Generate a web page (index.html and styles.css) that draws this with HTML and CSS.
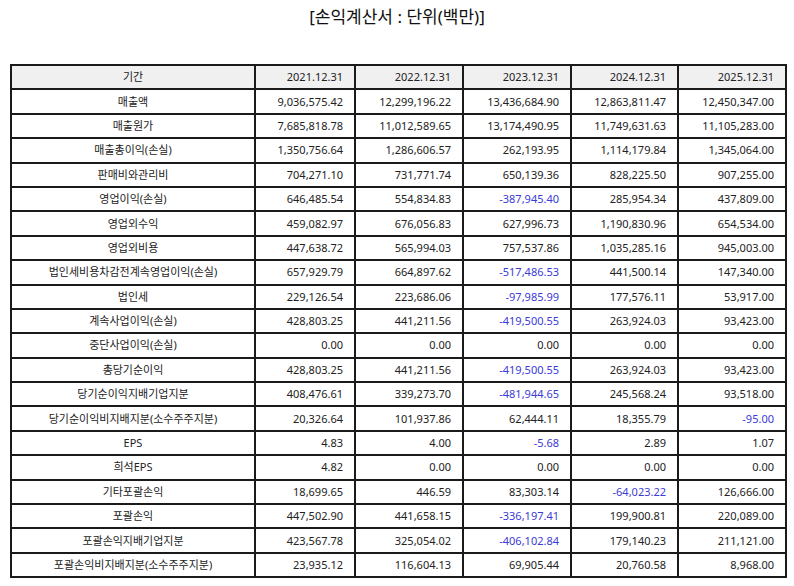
FILE: index.html
```html
<!DOCTYPE html>
<html lang="ko">
<head>
<meta charset="utf-8">
<link rel="stylesheet" href="styles.css">
</head>
<body>
<h1 class="title">[손익계산서 : 단위(백만)]</h1>
<table class="fin">
<colgroup>
<col class="c-label"><col class="c-y1"><col class="c-y2"><col class="c-y3"><col class="c-y4"><col class="c-y5">
</colgroup>
<thead>
<tr><th class="label">기간</th><th>2021.12.31</th><th>2022.12.31</th><th>2023.12.31</th><th>2024.12.31</th><th>2025.12.31</th></tr>
</thead>
<tbody>
<tr><td class="label">매출액</td><td>9,036,575.42</td><td>12,299,196.22</td><td>13,436,684.90</td><td>12,863,811.47</td><td>12,450,347.00</td></tr>
<tr><td class="label">매출원가</td><td>7,685,818.78</td><td>11,012,589.65</td><td>13,174,490.95</td><td>11,749,631.63</td><td>11,105,283.00</td></tr>
<tr><td class="label">매출총이익(손실)</td><td>1,350,756.64</td><td>1,286,606.57</td><td>262,193.95</td><td>1,114,179.84</td><td>1,345,064.00</td></tr>
<tr><td class="label">판매비와관리비</td><td>704,271.10</td><td>731,771.74</td><td>650,139.36</td><td>828,225.50</td><td>907,255.00</td></tr>
<tr><td class="label">영업이익(손실)</td><td>646,485.54</td><td>554,834.83</td><td class="neg">-387,945.40</td><td>285,954.34</td><td>437,809.00</td></tr>
<tr><td class="label">영업외수익</td><td>459,082.97</td><td>676,056.83</td><td>627,996.73</td><td>1,190,830.96</td><td>654,534.00</td></tr>
<tr><td class="label">영업외비용</td><td>447,638.72</td><td>565,994.03</td><td>757,537.86</td><td>1,035,285.16</td><td>945,003.00</td></tr>
<tr><td class="label">법인세비용차감전계속영업이익(손실)</td><td>657,929.79</td><td>664,897.62</td><td class="neg">-517,486.53</td><td>441,500.14</td><td>147,340.00</td></tr>
<tr><td class="label">법인세</td><td>229,126.54</td><td>223,686.06</td><td class="neg">-97,985.99</td><td>177,576.11</td><td>53,917.00</td></tr>
<tr><td class="label">계속사업이익(손실)</td><td>428,803.25</td><td>441,211.56</td><td class="neg">-419,500.55</td><td>263,924.03</td><td>93,423.00</td></tr>
<tr><td class="label">중단사업이익(손실)</td><td>0.00</td><td>0.00</td><td>0.00</td><td>0.00</td><td>0.00</td></tr>
<tr><td class="label">총당기순이익</td><td>428,803.25</td><td>441,211.56</td><td class="neg">-419,500.55</td><td>263,924.03</td><td>93,423.00</td></tr>
<tr><td class="label">당기순이익지배기업지분</td><td>408,476.61</td><td>339,273.70</td><td class="neg">-481,944.65</td><td>245,568.24</td><td>93,518.00</td></tr>
<tr><td class="label">당기순이익비지배지분(소수주주지분)</td><td>20,326.64</td><td>101,937.86</td><td>62,444.11</td><td>18,355.79</td><td class="neg">-95.00</td></tr>
<tr><td class="label">EPS</td><td>4.83</td><td>4.00</td><td class="neg">-5.68</td><td>2.89</td><td>1.07</td></tr>
<tr><td class="label">희석EPS</td><td>4.82</td><td>0.00</td><td>0.00</td><td>0.00</td><td>0.00</td></tr>
<tr><td class="label">기타포괄손익</td><td>18,699.65</td><td>446.59</td><td>83,303.14</td><td class="neg">-64,023.22</td><td>126,666.00</td></tr>
<tr><td class="label">포괄손익</td><td>447,502.90</td><td>441,658.15</td><td class="neg">-336,197.41</td><td>199,900.81</td><td>220,089.00</td></tr>
<tr><td class="label">포괄손익지배기업지분</td><td>423,567.78</td><td>325,054.02</td><td class="neg">-406,102.84</td><td>179,140.23</td><td>211,121.00</td></tr>
<tr><td class="label">포괄손익비지배지분(소수주주지분)</td><td>23,935.12</td><td>116,604.13</td><td>69,905.44</td><td>20,760.58</td><td>8,968.00</td></tr>
</tbody>
</table>
</body>
</html>
```

FILE: styles.css
```css
html, body {
  margin: 0;
  padding: 0;
  background: #ffffff;
}
body {
  font-family: "Noto Sans", "Noto Sans CJK KR", sans-serif;
  color: #222222;
}
.title {
  margin: 0;
  padding-top: 5px;
  height: 64px;
  box-sizing: border-box;
  text-align: center;
  font-size: 17px;
  font-weight: normal;
  line-height: 24px;
  color: #111111;
}
.fin {
  margin-left: 10px;
  width: 775px;
  border-collapse: collapse;
  table-layout: fixed;
  font-size: 11px;
}
.c-label { width: 244px; }
.c-y1 { width: 100px; }
.c-y2 { width: 108px; }
.c-y3 { width: 108px; }
.c-y4 { width: 107px; }
.c-y5 { width: 108px; }
.fin th, .fin td {
  border: 2px solid #1a1a1a;
  height: 24.4px;
  padding: 0 11px 0 4px;
  text-align: right;
  font-weight: normal;
  white-space: nowrap;
  line-height: 14px;
  box-sizing: border-box;
}
.fin thead th {
  background: #f0f0f0;
}
.fin .label {
  text-align: center;
  padding: 0 4px;
}
.fin .neg {
  color: #3b3bd6;
}
```
